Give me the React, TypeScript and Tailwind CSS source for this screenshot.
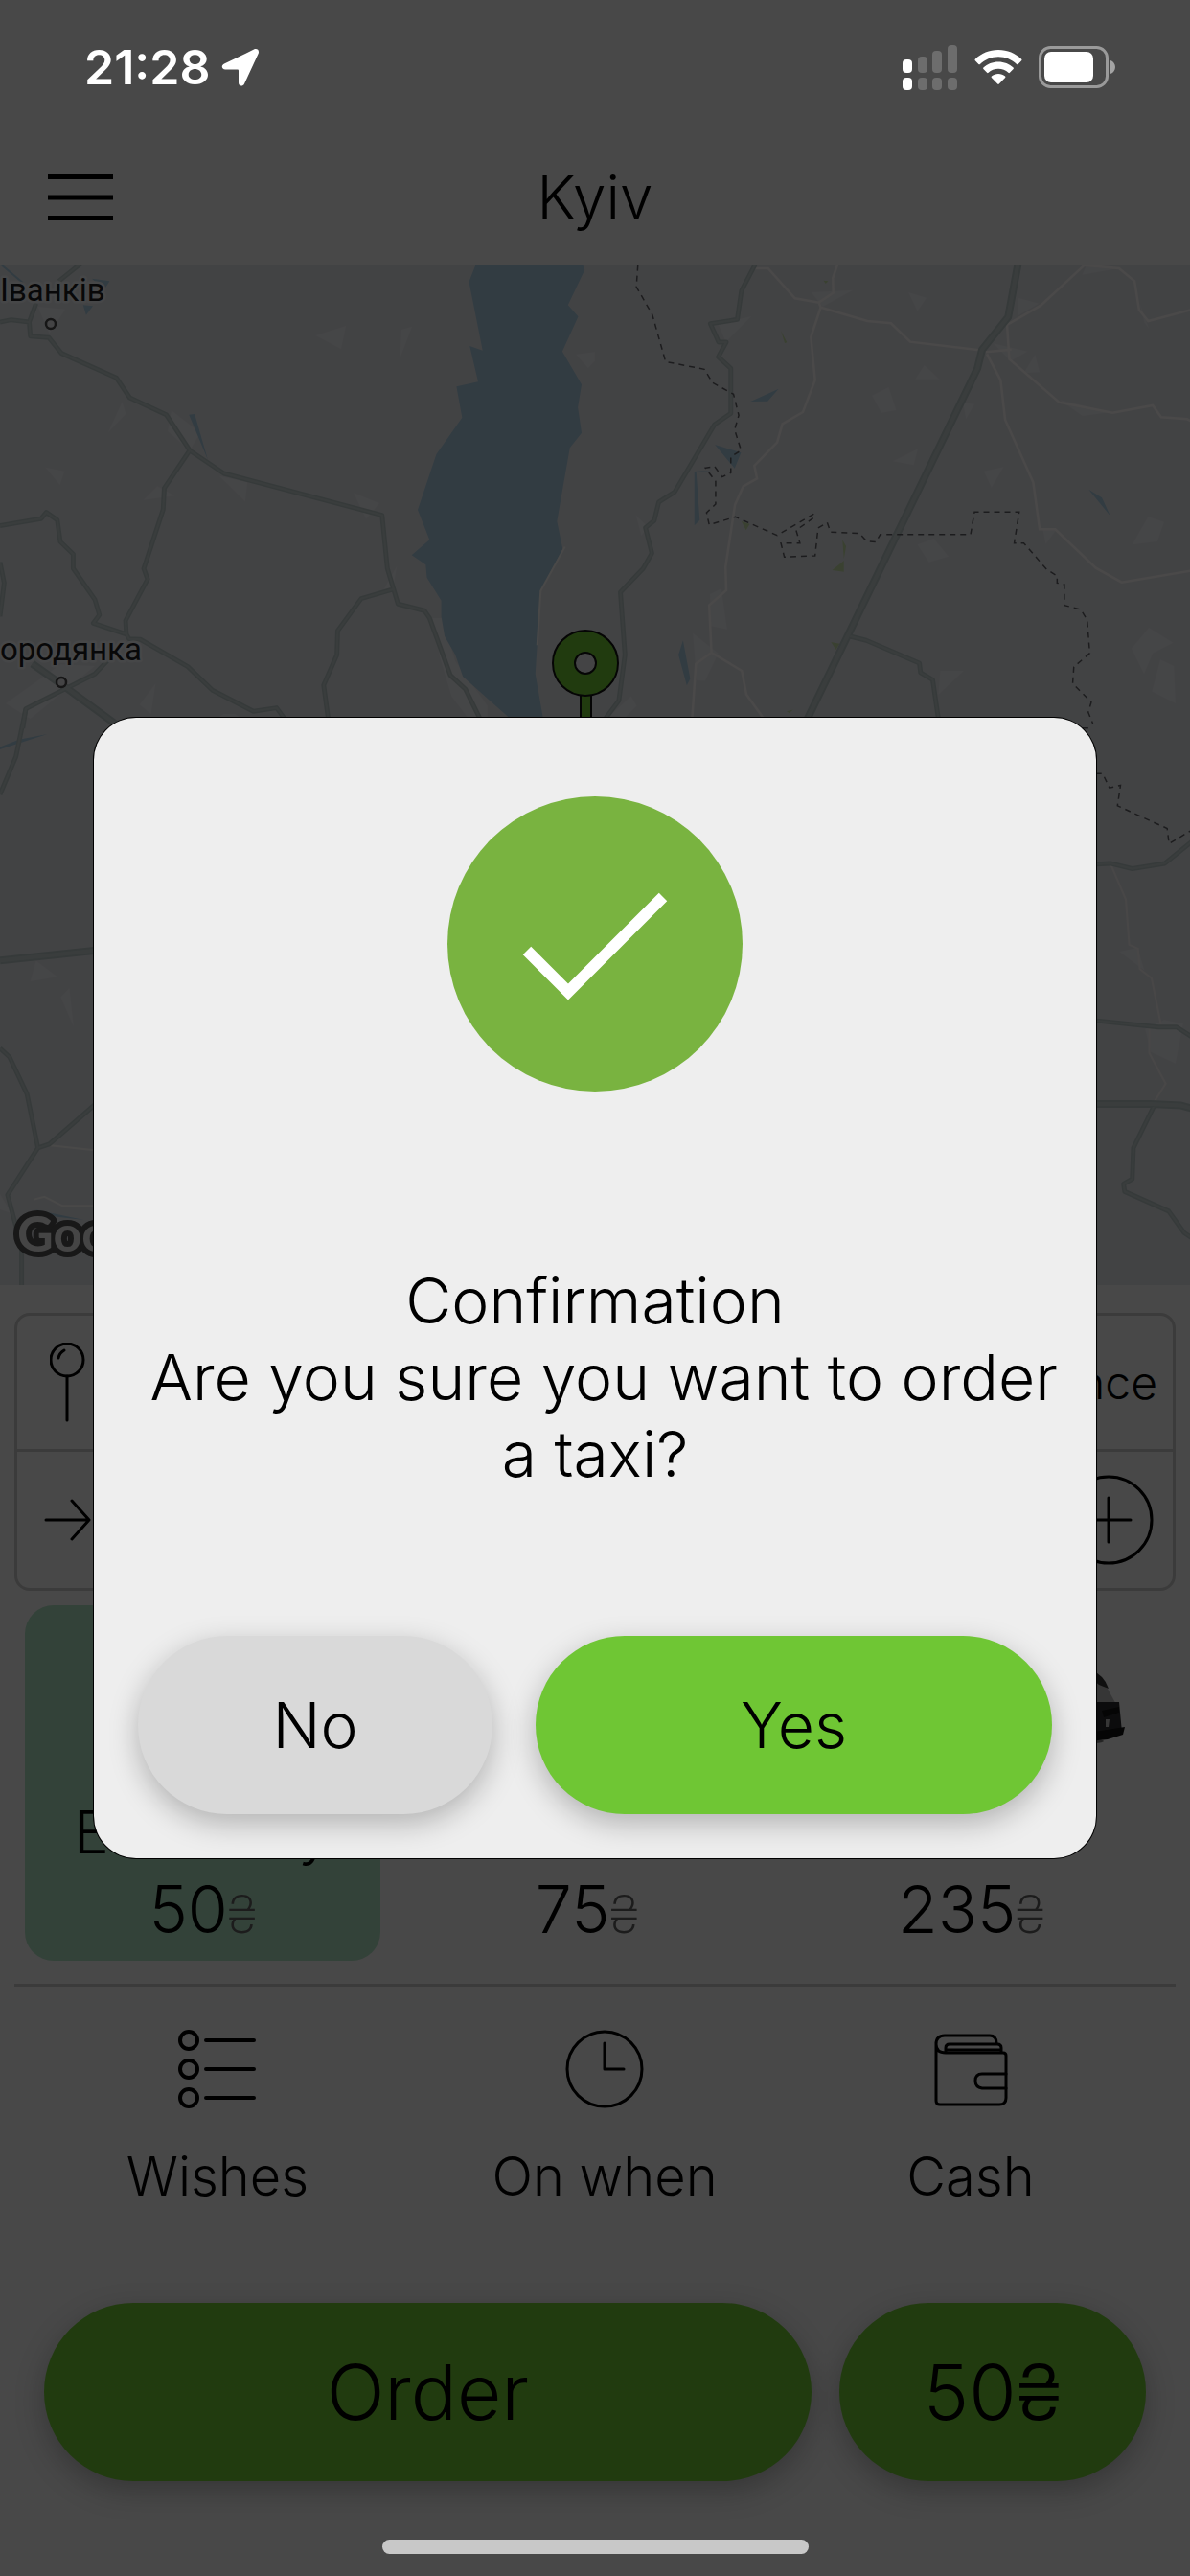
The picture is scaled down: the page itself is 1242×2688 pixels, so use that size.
import type { ReactNode } from 'react'

type Tariff = { name?: string; price: number; selected?: boolean }

const tariffs: Tariff[] = [
  { name: 'Economy', price: 50, selected: true },
  { price: 75 },
  { price: 235 },
]

function StatusBar() {
  return (
    <div className="relative z-20 flex h-[136px] items-center justify-between pl-[88px] pr-[78px] pt-1 text-white">
      <div className="flex items-center gap-3">
        <span className="font-['Inter',sans-serif] text-[50px] font-semibold leading-[60px]">21:28</span>
        <svg width="40" height="40" viewBox="0 0 40 40" fill="currentColor">
          <path d="M34 1.6 3 16.5c-3.600 1.800-2.600 6 1.200 6h12.600c.7 0 1.200.5 1.200 1.200v12.500c0 3.800 4.400 4.500 6 1.200L38.600 6c1.500-3.500-1.400-6-4.600-4.400Z" />
        </svg>
      </div>
      <div className="flex items-center gap-[17px]">
        <svg width="58" height="50" viewBox="0 0 58 50" fill="currentColor">
          <rect x="0" y="17" width="10" height="14" rx="4" />
          <rect x="0" y="36" width="10" height="13" rx="4" />
          <g opacity=".2">
            <rect x="16" y="14" width="10" height="17" rx="4" />
            <rect x="16" y="36" width="10" height="13" rx="4" />
            <rect x="31" y="8" width="10" height="23" rx="4" />
            <rect x="31" y="36" width="10" height="13" rx="4" />
            <rect x="47" y="2" width="10" height="29" rx="4" />
            <rect x="47" y="36" width="10" height="13" rx="4" />
          </g>
        </svg>
        <svg width="50" height="38" viewBox="0 0 50 38" fill="currentColor">
          <path d="M25 1C15.500 1 7 4.700 .8 10.700c-.5.5-.5 1 0 1.500l3.600 3.700c.5.500 1 .5 1.500 0C10.900 11.200 17.600 8.300 25 8.300s14.100 2.900 19.100 7.600c.5.5 1 .5 1.500 0l3.600-3.700c.5-.5.5-1 0-1.500C43 4.700 34.500 1 25 1Z" />
          <path d="M25 13.500c-6 0-11.500 2.300-15.600 6.100-.5.500-.5 1 0 1.500l3.700 3.700c.5.5 1 .5 1.500 0 2.700-2.500 6.400-4 10.400-4s7.700 1.500 10.400 4c.5.5 1 .5 1.500 0l3.700-3.700c.5-.5.5-1 0-1.500C36.500 15.800 31 13.500 25 13.500Z" />
          <path d="M25 26c-2.700 0-5.200 1-7.100 2.600-.5.5-.5 1 0 1.500l6.300 6.500c.5.5 1.100.5 1.600 0l6.300-6.500c.5-.5.5-1 0-1.500C30.200 27 27.700 26 25 26Z" />
        </svg>
        <svg width="80" height="44" viewBox="0 0 80 44">
          <rect x="1.500" y="1.500" width="70" height="41" rx="11" fill="none" stroke="#fff" strokeOpacity=".45" strokeWidth="3" />
          <rect x="6" y="6" width="51" height="32" rx="7" fill="#fff" />
          <path d="M75 15c3 1 5 4 5 7s-2 6-5 7Z" fill="#fff" fillOpacity=".5" />
        </svg>
      </div>
    </div>
  )
}

// Each <g> is one map tile, its paths are in tile units
function CityMap() {
  return (
    <svg
      className="absolute inset-0 h-full w-full [&_path]:[vector-effect:non-scaling-stroke]"
      viewBox="0 276 1242 1065"
      preserveAspectRatio="xMidYMin slice"
    >
      <rect y="270" width="1242" height="1080" fill="#dee0e5" />

      <g transform="translate(0 270) scale(.396 .3333)" fill="#e8e9ed">
        <path d="M832 240 912 210 899 283ZM1058 222 1086 212 1054 312ZM1518 299 1568 292V320L1550 342ZM322 448 332 485 285 544ZM452 475 528 545 500 600 442 540ZM120 653 170 665 158 708ZM378 755 415 712 460 742ZM578 680 652 700 646 760ZM932 733 1000 765 965 815ZM1046 962 1036 1032 1012 1034ZM100 150 172 158 130 235ZM410 1330 398 1425 368 1396ZM15 1392 160 1270 250 1275 80 1440ZM1140 1125 1165 1125 1200 1260 1285 1400V1440H1235L1190 1370 1160 1250ZM575 1436 590 1425 620 1425 632 1436Z" />
        <g fill="#a7c9dd">
          <path d="M1254 18H1536L1541 35 1497 145 1524 181 1482 290 1533 394 1523 465 1533 545 1502 592 1486 700 1468 822 1483 908 1425 1040 1411 1300 1436 1470H1370L1335 1430 1220 1308 1200 1240 1172 1182 1163 1120V1070L1125 998 1122 958 1085 928 1132 880 1101 786 1150 612 1218 497 1203 400 1260 385 1238 273 1272 287 1236 72Z" />
          <path d="M242 62 289 70 275 96ZM219 145 245 148 227 176ZM498 488 513 486 548 630Z" />
        </g>
        <path d="M5 20 60 75" fill="none" stroke="#a7c9dd" strokeWidth="2" />
        <path d="M1489 902 1425 1040 1416 1210" fill="none" stroke="#f6f3f2" strokeWidth="2" />
      </g>

      <g transform="translate(621 270) scale(.396 .3333)">
        <path
          fill="#e8e9ed"
          d="M570 105 680 98 600 150ZM826 105 874 122 850 164ZM1284 50 1295 22 1380 30ZM1115 122 1170 140 1115 178ZM868 333 908 377H844ZM730 428 774 402 794 474 755 482ZM970 450 1000 455 978 502ZM785 634 851 595 840 646ZM1025 665 1077 652 1045 716ZM1458 807 1500 824 1482 885 1416 895ZM850 895 893 876 932 932 880 950ZM1180 845 1215 850 1188 893ZM325 205 412 180 345 260ZM1050 265 1140 290 1095 320ZM1160 300 1172 355 1130 358ZM1225 442 1360 480 1285 492ZM1460 1155 1524 1202 1470 1235 1447 1300 1414 1220ZM1490 1255 1526 1275 1530 1392 1468 1355ZM910 1290H972L905 1365ZM303 1050 333 1033 348 1160 305 1150ZM258 1172 325 1235 290 1322 268 1320ZM40 1430 95 1370 110 1400 80 1436ZM108 803 140 840 122 867ZM1436 140 1460 218 1448 200Z"
        />
        <path
          fill="#a7c9dd"
          d="M410 447 484 407 455 446ZM316 582 385 607 368 656ZM262 666 312 662 267 668 276 818 262 835ZM1301 722 1336 748 1358 805ZM232 1195 251 1315 242 1336 220 1240Z"
        />
        <path fill="#c3dba6" d="M386 822 408 830 398 850ZM625 975 656 945V980ZM652 880 662 900 656 940ZM622 1200 645 1205 635 1224ZM490 225 506 262 500 264ZM602 68 615 70 608 78ZM505 1417 522 1412 512 1422Z" />
        <g fill="none" stroke="#f8f4f3" strokeWidth="2.500">
          <path d="M420 30H456L527 124 590 137 628 107 627 60 640 15M590 137 595 152 718 195 780 202 831 260 1020 287M595 152 569 245 580 380 548 480 494 517 480 575 420 648 427 688 391 712 369 770 344 965 346 1038 301 1085 307 1233 266 1268 256 1440M307 1233 387 1290 399 1364 445 1440" />
          <path d="M1290 20 1381 30 1422 70 1434 160 1458 195 1570 160M1290 20 1175 146 1086 207 1092 314 1223 449 1364 482 1470 459 1492 496 1560 502 1570 508M1030 292 1098 284M1033 298 1069 380 1081 504 1155 700 1172 847H1213L1320 968 1388 1013 1570 977" />
        </g>
      </g>

      <g transform="translate(0 740) scale(.396 .3954)">
        <path fill="#e8e9ed" d="M95 664 151 706 80 718ZM183 736 194 838 160 760ZM0 1280 30 1330 0 1320Z" />
        <path fill="#a7c9dd" d="M0 100 50 80 125 66 0 106ZM90 1320 222 1348 150 1340Z" />
        <path d="M90 1294 117 1287 165 1311H260M122 1150 260 1165" fill="none" stroke="#f6f3f2" strokeWidth="2" />
      </g>

      <g transform="translate(621 740) scale(.396 .3954)">
        <path fill="#e8e9ed" d="M1382 640 1430 630 1448 690ZM1450 845 1500 820 1550 830 1530 935 1465 905Z" />
        <path
          d="M1358 407 1399 502 1408 622 1431 632 1436 686 1467 710 1493 840M1461 840V908L1504 988 1476 1033"
          fill="none"
          stroke="#f2eeee"
          strokeWidth="2"
        />
      </g>

      {/* roads: wide dark casing first, lighter core over it */}
      {[
        { stroke: '#b5c3c3', minor: 5, major: 8 },
        { stroke: '#c2cece', minor: 2, major: 4 },
      ].map((layer) => (
        <g key={layer.stroke} fill="none" stroke={layer.stroke} strokeLinejoin="round">
          <g strokeWidth={layer.minor}>
            <g transform="translate(0 270) scale(.396 .3333)">
              <path d="M213 15 155 70M95 140 77 198 80 242 129 247 162 296 307 373 342 435 438 488 500 600 590 672 1007 803 1021 970 1049 1081 1119 1102 1132 1125 1187 1304 1227 1348 1265 1440M0 198 30 191 77 198M500 600 433 718 430 785 379 970 389 1003 331 1133 333 1175 340 1190 370 1192 495 1277 560 1351 668 1417 729 1406 750 1440M0 836 108 814 122 794 151 818 159 886 193 925V970L250 1067 262 1115 246 1141 331 1175M1036 1035 952 1064 890 1165 888 1240 853 1335 865 1440M0 950 11 1015 0 1120M290 1250 250 1300 68 1409 60 1470" />
            </g>
            <g transform="translate(621 270) scale(.396 .3333)">
              <path d="M422 18 386 100 375 190 304 203 326 261H346L325 307 358 343V484L315 519 210 730 168 762 156 820 133 842 150 922 127 970 67 1044 79 1240 63 1383 27 1440M672 1182 715 1195 855 1266 858 1296 890 1318 905 1440" />
            </g>
            <g transform="translate(0 740) scale(.396 .3954)">
              <path d="M68 0 42 125 0 225M0 895 25 918 71 1015 100 1158 20 1282 57 1420V1530M100 1158 130 1148 260 1035" />
            </g>
            <g transform="translate(621 740) scale(.396 .3954)">
              <path d="M1310 410 1358 407 1416 421 1502 407 1575 348M1310 821 1485 839H1533L1575 866M1472 1050 1419 1158 1416 1240 1393 1253 1396 1273 1512 1325 1553 1382 1575 1397" />
            </g>
          </g>
          <g strokeWidth={layer.major}>
            <g transform="translate(0 270) scale(.396 .3333)">
              <path d="M85 1268 165 1335 320 1470" />
            </g>
            <g transform="translate(621 270) scale(.396 .3333)">
              <path d="M1115 15 1089 182 1020 285 1008 343 752 970 560 1440" />
            </g>
            <g transform="translate(0 740) scale(.396 .3954)">
              <path d="M0 663 260 636" />
            </g>
            <g transform="translate(621 740) scale(.396 .3954)">
              <path d="M1310 1042H1465L1545 1046 1575 1054" />
            </g>
          </g>
        </g>
      ))}

      <g fill="none" stroke="#606064" strokeWidth="1.500" strokeDasharray="6 5">
        <path
          transform="translate(621 270) scale(.396 .3333)"
          d="M113 20 109 88 151 175 186 322 288 346 310 388 365 424 379 490 368 535 385 600 358 620V670L335 683 315 650 291 655 318 697V768L294 795 301 833 370 808 480 866 575 800 580 808 530 850 540 890H490L499 934 580 930 588 843 612 826 621 856 697 860 716 884 740 887 752 863H990L1000 793H1118L1105 890H1130L1190 972 1218 993V1015L1237 1020V1085L1280 1098 1297 1130 1304 1235 1262 1278 1259 1330 1308 1388 1300 1420 1312 1455"
        />
        <path
          transform="translate(621 740) scale(.396 .3954)"
          d="M1285 50H1302M1320 170H1338L1356 208 1385 201 1377 255 1508 315 1513 355 1575 318"
        />
      </g>

      <g fill="#e4e4e6" stroke="#4a4a4a" strokeWidth="2.500">
        <circle cx="53" cy="338" r="5" />
        <circle cx="64" cy="712" r="5" />
      </g>
      <g
        className="font-['Roboto',sans-serif] text-[33px] font-normal [paint-order:stroke]"
        fill="#1c1c1e"
        stroke="#eceef2"
        strokeWidth="5"
        strokeLinejoin="round"
      >
        <text x="0" y="314">Іванків</text>
        <text x="0" y="689">ородянка</text>
      </g>

      <path d="M606 725h11v60h-11Z" fill="#6fc634" stroke="#111" strokeWidth="2" />
      <circle cx="611" cy="692" r="34" fill="#6fc634" stroke="#111" strokeWidth="2" />
      <circle cx="611" cy="692" r="11" fill="#e4e4e6" stroke="#111" strokeWidth="2" />

      <text
        x="18"
        y="1306"
        className="font-['Lato',sans-serif] text-[52px] font-bold [paint-order:stroke]"
        fill="#e6e6e6"
        stroke="#505050"
        strokeWidth="12"
        strokeLinejoin="round"
      >
        Google
      </text>
    </svg>
  )
}

function Car() {
  return (
    <svg className="mx-auto mb-[48px] w-[320px]" viewBox="0 0 320 86">
      <ellipse cx="160" cy="79" rx="138" ry="6" fill="#7a7a7a" />
      <path d="M30 62 34 40 80 26Q116 2 180 2h92q22 4 31 24l10 18 4 24-8 6-40 2H70Z" fill="#b4b4b6" />
      <path d="M284 5q14 4 19 19l-10-4-14-12Z" fill="#333" />
      <path d="M274 38h40l3 32-8 3-24 3h-12Z" fill="#2b2b2e" />
      <path d="m296 47 18-4v6l-16 5Z" fill="#111" />
      <path d="m282 70 38-6-2 8-16 5-20 2Z" fill="#111" />
      <path d="M300 56h4l-1 8h-3Z" fill="#b4b4b6" />
    </svg>
  )
}

function TariffCard({ name, price, selected }: Tariff) {
  return (
    <button
      className={`flex h-[371px] flex-col items-center justify-end rounded-[30px] pb-[8px] ${selected ? 'bg-[#aadcbe]' : ''}`}
    >
      {!selected && <Car />}
      <span className="h-[80px] text-[62px] leading-[80px]">{name}</span>
      <span className="text-[68px] leading-[80px]">
        {price}
        <span className="text-[54px] font-extralight text-[#606060]">₴</span>
      </span>
    </button>
  )
}

function Option({ label, children }: { label: string; children: ReactNode }) {
  return (
    <button className="flex flex-col items-center gap-[30px]">
      <svg
        width="84"
        height="84"
        viewBox="0 0 84 84"
        fill="none"
        stroke="currentColor"
        strokeWidth="4"
        strokeLinecap="round"
        strokeLinejoin="round"
      >
        {children}
      </svg>
      <span className="text-[56px] leading-[80px]">{label}</span>
    </button>
  )
}

function ConfirmDialog() {
  return (
    <div
      role="dialog"
      aria-labelledby="confirm-title"
      className="mx-[98px] flex flex-1 flex-col rounded-[44px] bg-[#eee] pb-[46px] pt-[82px] ring-1 ring-black"
    >
      <svg className="mx-auto" width="308" height="308" viewBox="0 0 308 308">
        <circle cx="154" cy="154" r="154" fill="#79b340" />
        <path d="m83 161 43 43 99-99" fill="none" stroke="#fff" strokeWidth="12" />
      </svg>
      <div className="mt-[178px] px-5 text-center text-[66px] leading-[80px]">
        <h2 id="confirm-title">Confirmation</h2>
        <p>
          &nbsp;Are you sure you want to order
          <br />a taxi?
        </p>
      </div>
      <div className="mt-[150px] flex gap-[45px] px-[46px] text-[66px]">
        <button className="h-[186px] w-[370px] rounded-full bg-[#d9d9d9] shadow-[0_10px_30px_rgba(0,0,0,0.25)]">
          No
        </button>
        <button className="h-[186px] flex-1 rounded-full bg-[#6fc634] shadow-[0_10px_30px_rgba(0,0,0,0.25)]">
          Yes
        </button>
      </div>
    </div>
  )
}

export default function App() {
  return (
    <div className="relative flex min-h-screen flex-col overflow-hidden bg-[#f0f0f0] font-['Inter','Liberation_Sans',sans-serif] font-light text-black">
      <StatusBar />

      <header className="grid h-[140px] grid-cols-[1fr_auto_1fr] items-center px-[50px]">
        <button aria-label="Menu">
          <svg width="68" height="50" viewBox="0 0 68 50" stroke="currentColor" strokeWidth="5">
            <path d="M0 3.500h68M0 25h68M0 46.500h68" />
          </svg>
        </button>
        <h1 className="text-[62px] leading-[80px]">Kyiv</h1>
      </header>

      <section className="relative min-h-[400px] flex-1 overflow-hidden">
        <CityMap />
      </section>

      <section className="mx-[15px] mt-[29px] rounded-[16px] border-[3px] border-[#c5c5c5]">
        <div className="flex h-[142px] items-center justify-between border-b-[3px] border-[#c5c5c5] pl-[34px] pr-[16px]">
          <svg width="40" height="84" viewBox="0 0 40 84" fill="none" stroke="currentColor" strokeWidth="3" strokeLinecap="round">
            <circle cx="18" cy="18" r="17" />
            <path d="M18 35v46M9 16q1-5 6-8" />
          </svg>
          <span className="text-[48px]">Entrance</span>
        </div>
        <div className="flex h-[142px] items-center justify-between pl-[28px] pr-[20px]">
          <svg width="50" height="44" viewBox="0 0 50 44" fill="none" stroke="currentColor" strokeWidth="3" strokeLinecap="round" strokeLinejoin="round">
            <path d="M2 22h45M29 2l18 20-18 20" />
          </svg>
          <button aria-label="Add address">
            <svg width="94" height="94" viewBox="0 0 94 94" fill="none" stroke="currentColor" strokeWidth="3" strokeLinecap="round">
              <circle cx="47" cy="47" r="45" />
              <path d="M47 24v46M24 47h46" />
            </svg>
          </button>
        </div>
      </section>

      <section className="mt-[15px] grid grid-cols-3 gap-[30px] pl-[26px] pr-[43px]">
        {tariffs.map((tariff) => (
          <TariffCard key={tariff.price} {...tariff} />
        ))}
      </section>

      <hr className="mx-[15px] mt-[24px] border-t-[3px] border-[#c5c5c5]" />

      <section className="mt-[44px] grid grid-cols-[101fr_101fr_90fr] pl-[25px] pr-[49px]">
        <Option label="Wishes">
          <circle cx="12" cy="12" r="9" />
          <circle cx="12" cy="42" r="9" />
          <circle cx="12" cy="72" r="9" />
          <path d="M30 12h50M30 42h50M30 72h50" />
        </Option>
        <Option label="On when">
          <circle cx="42" cy="42" r="39" strokeWidth="3" />
          <path d="M42 15v27h20" strokeWidth="3" />
        </Option>
        <Option label="Cash">
          <g strokeWidth="3">
            <path d="M6 14v61q0 4 4 4h62q7 0 7-7V28q0-3-3-3H16Q6 25 6 16t9-9h47q7 0 7 8" />
            <path d="M16 24v-4q0-4 4-4h50q4 0 4 4v4M17 22h56" />
            <path d="M79 47H54q-7 0-7 7t7 8h25" />
          </g>
        </Option>
      </section>

      <footer className="mt-[92px] flex gap-[29px] px-[46px] pb-[99px] text-[80px]">
        <button className="h-[186px] flex-[5] rounded-full bg-[#6fc634] shadow-[0_10px_30px_rgba(0,0,0,0.25)]">
          Order
        </button>
        <button className="h-[186px] flex-[2] rounded-full bg-[#6fc634] shadow-[0_10px_30px_rgba(0,0,0,0.25)]">
          50₴
        </button>
      </footer>

      <div className="absolute inset-0 z-10 flex items-center bg-black/70">
        <ConfirmDialog />
      </div>
      <div className="absolute inset-x-0 bottom-[23px] z-20 mx-auto h-[15px] w-[445px] rounded-full bg-[#c8c8c8]" />
    </div>
  )
}
